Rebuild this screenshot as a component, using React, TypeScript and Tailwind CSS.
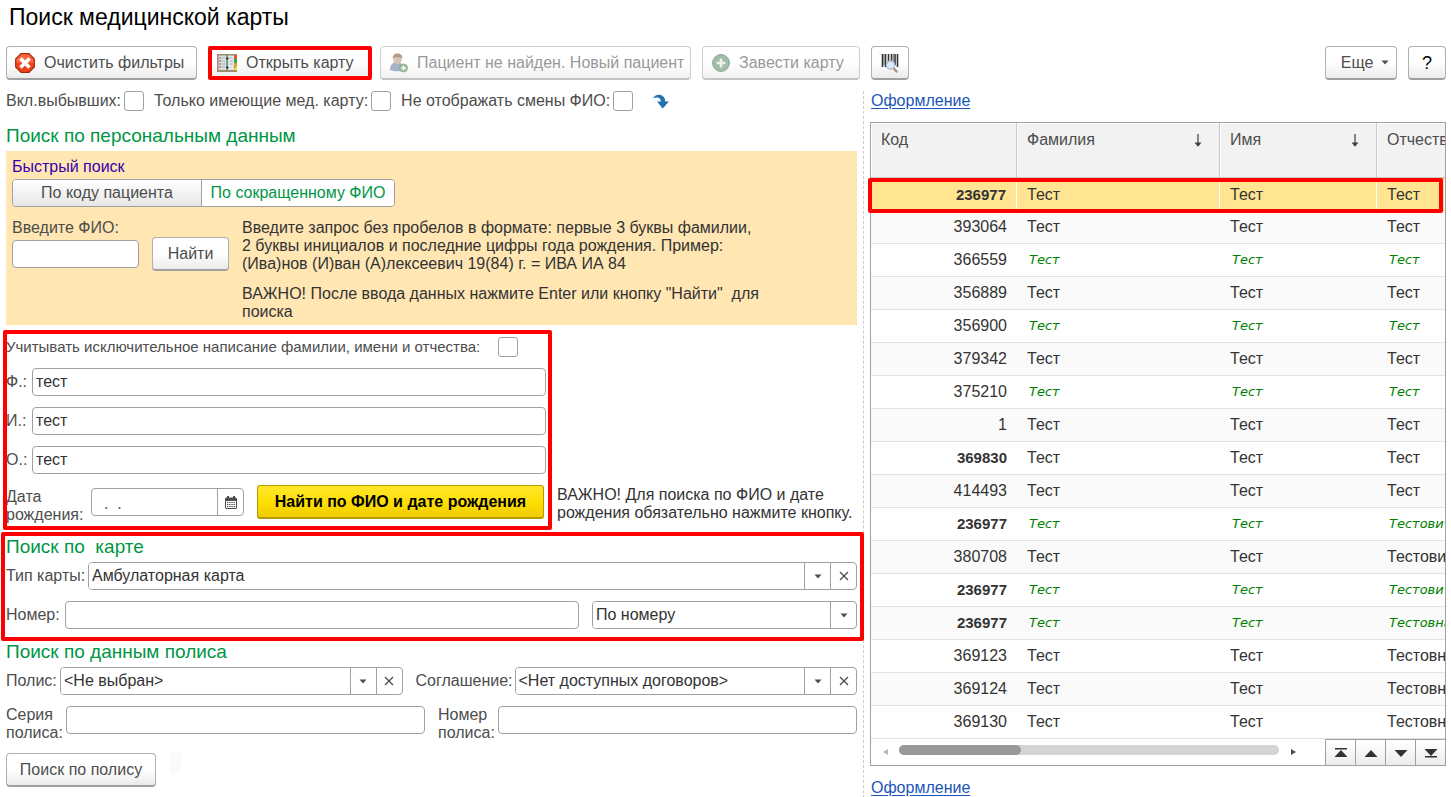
import { useState } from "react";
import type { ReactNode } from "react";

interface Patient {
  code: string;
  middleName: string;
  bold?: boolean;
  green?: boolean;
}

const patients: Patient[] = [
  { code: "236977", middleName: "Тест", bold: true },
  { code: "393064", middleName: "Тест" },
  { code: "366559", middleName: "Тест", green: true },
  { code: "356889", middleName: "Тест" },
  { code: "356900", middleName: "Тест", green: true },
  { code: "379342", middleName: "Тест" },
  { code: "375210", middleName: "Тест", green: true },
  { code: "1", middleName: "Тест" },
  { code: "369830", middleName: "Тест", bold: true },
  { code: "414493", middleName: "Тест" },
  { code: "236977", middleName: "Тестович", bold: true, green: true },
  { code: "380708", middleName: "Тестович" },
  { code: "236977", middleName: "Тестович", bold: true, green: true },
  { code: "236977", middleName: "Тестовна", bold: true, green: true },
  { code: "369123", middleName: "Тестовна" },
  { code: "369124", middleName: "Тестовна" },
  { code: "369130", middleName: "Тестовна" },
];

const buttonStyle =
  "flex h-[34px] shrink-0 items-center justify-center whitespace-nowrap rounded-[4px] border border-[#b0b0b0] border-b-2 border-b-[#a0a0a0] bg-linear-to-b from-white from-50% to-[#ebebeb] text-[#4d4d4d]";
const disabledStyle =
  "flex h-[34px] shrink-0 items-center whitespace-nowrap rounded-[4px] border border-[#cfcfcf] border-b-2 border-b-[#c4c4c4] bg-linear-to-b from-white from-50% to-[#f0f0f0] text-[#999999]";
const inputStyle =
  "h-7 min-w-0 rounded-[4px] border border-[#a0a0a0] bg-white px-[3px] text-[#333333] outline-none";

// Red highlight drawn over a group of controls
const Frame = ({ className }: { className: string }) => (
  <div className={`pointer-events-none absolute rounded-[2px] border-4 border-[#ff0000] ${className}`} />
);

const Check = ({ label, className = "gap-[3px]" }: { label: string; className?: string }) => (
  <label className={`flex items-center whitespace-nowrap ${className}`}>
    {label}
    <input type="checkbox" className="size-5 shrink-0 appearance-none rounded-[3px] border border-[#a0a0a0] bg-white checked:bg-[#009646]" />
  </label>
);

const Heading = ({ children }: { children: ReactNode }) => (
  <h2 className="whitespace-pre text-[19px] leading-6 text-[#009646]">{children}</h2>
);

const Caret = () => (
  <svg width="8" height="5" viewBox="0 0 8 5" aria-hidden="true">
    <path d="M0.5 0.5h7L4 4.5z" fill="#4d4d4d" />
  </svg>
);

const Combo = ({ id, value, clearable, className }: { id: string; value: string; clearable?: boolean; className: string }) => (
  <div className={`flex h-7 min-w-0 overflow-hidden rounded-[4px] border border-[#a0a0a0] bg-white ${className}`}>
    <select id={id} aria-label={value} className="min-w-0 flex-1 appearance-none bg-white px-[3px] text-[#333333] outline-none">
      <option>{value}</option>
    </select>
    <span className="flex w-[26px] items-center justify-center border-l border-[#a0a0a0]">
      <Caret />
    </span>
    {clearable && (
      <button aria-label="Очистить" className="flex w-[26px] items-center justify-center border-l border-[#a0a0a0]">
        <svg width="10" height="10" viewBox="0 0 10 10" aria-hidden="true">
          <path d="M1 1l8 8M9 1l-8 8" stroke="#4d4d4d" strokeWidth="1.3" />
        </svg>
      </button>
    )}
  </div>
);

const ClearIcon = () => (
  <svg width="20" height="20" viewBox="0 0 20 20" aria-hidden="true">
    <path d="M6 .7h8L19.3 6v8L14 19.3H6L.7 14V6z" fill="#f0441a" stroke="#a8260e" strokeWidth="1.2" />
    <path d="M6.2 1.6h7.6L18.4 6.2v3.6H1.6V6.2z" fill="#fb6a42" />
    <path d="M6.8 6.8l6.4 6.4M13.200 6.800l-6.400 6.400" stroke="#fff" strokeWidth="3.6" strokeLinecap="square" />
  </svg>
);

const CardIcon = () => (
  <svg width="20" height="18" viewBox="0 0 20 18" aria-hidden="true">
    <rect width="20" height="18" fill="#a08a70" />
    <rect x="1.5" y="1.5" width="8" height="14.5" fill="#d3e2e1" />
    <rect x="10.5" y="1.5" width="6.5" height="14.5" fill="#dfe8e4" />
    <path d="M9.5 1h1.4v16H9.5z" fill="#6d8585" />
    <path d="M9 4.500h2.500M9 13.500h2.500" stroke="#222" strokeWidth="1.400" />
    <path d="M4.500 4h3.500M4.500 7h3.500M4.500 10h3.500M4.500 13h3.500M12.500 4h3M12.500 7h3M12.500 10h3" stroke="#a3bcc4" />
    <path d="M2.300 4h1.500M2.300 7h1.500M2.300 10h1.500M2.300 13h1.500" stroke="#e34b3d" strokeWidth="1.400" />
    <path d="M17 1h3v4h-3z" fill="#e8582c" />
    <path d="M17 5h3v4h-3z" fill="#35a852" />
    <path d="M17 9h3v4h-3z" fill="#e59b34" />
    <path d="M16 16l4-4v4z" fill="#f5e62c" />
  </svg>
);

const UserAddIcon = () => (
  <svg width="20" height="20" viewBox="0 0 20 20" aria-hidden="true">
    <path d="M1 17c0-5 2.500-7.500 6-7.500h2c4 0 6 3 6 7.500-3 1.800-11 1.800-14 0z" fill="#a4b4c8" />
    <ellipse cx="8.500" cy="6" rx="4.300" ry="5" fill="#d8c4b4" />
    <path d="M3.800 6C3.500 2 5.500.5 8.500.5S13.700 2 13.300 6L12 4.500 5.500 4z" fill="#b09a8c" />
    <circle cx="14.500" cy="15" r="4" fill="#9dbd9d" stroke="#86a786" strokeWidth=".8" />
    <path d="M14.500 12.800v4.400M12.300 15h4.400" stroke="#fff" strokeWidth="1.400" />
  </svg>
);

const PlusIcon = () => (
  <svg width="18" height="18" viewBox="0 0 18 18" aria-hidden="true">
    <circle cx="9" cy="9" r="8.400" fill="#9fbda7" stroke="#87a590" />
    <path d="M9 4.500v9M4.500 9h9" stroke="#eef0ee" strokeWidth="2.600" />
  </svg>
);

const BarcodeIcon = () => (
  <svg width="20" height="20" viewBox="0 0 20 20" aria-hidden="true">
    <path d="M2.500 1v13M5.500 1v13M8.500 1v9M11.500 1v9M15 1v11M17.500 1v13" stroke="#333" strokeWidth="1.600" />
    <path d="M4 1v11M13.300 1v9" stroke="#444" strokeWidth=".7" />
    <path d="M13 14.500l3.500 4" stroke="#c08a6a" strokeWidth="2.400" strokeLinecap="round" />
    <circle cx="10.500" cy="12" r="4.200" fill="#d9e8fa" stroke="#a9b5d0" strokeWidth="1.200" />
  </svg>
);

const CalendarIcon = () => (
  <svg width="12" height="13" viewBox="0 0 12 13" aria-hidden="true">
    <path d="M1 1.500h10l1 1V12l-1 1H1l-1-1V2.500z" fill="#4d4d4d" />
    <path d="M3 0v3M9 0v3" stroke="#4d4d4d" strokeWidth="2" />
    <path d="M1 5h10v7H1z" fill="#fff" />
    <path d="M2 6.500h8M2 8.500h8M2 10.500h8" stroke="#4d4d4d" strokeWidth="1.200" strokeDasharray="1.400 .8" />
  </svg>
);

const SortArrow = () => (
  <svg width="8" height="13" viewBox="0 0 8 13" aria-hidden="true">
    <path d="M4 0v10" stroke="#404040" strokeWidth="1.200" />
    <path d="M.5 8.500h7L4 12.800z" fill="#404040" />
  </svg>
);

const pagerButtons = [
  { label: "В начало", path: "M1 0h12v1.500H1zM7 2l6.500 7H.5z" },
  { label: "Вверх", path: "M7 2l6.500 7H.5z" },
  { label: "Вниз", path: "M.5 2h13L7 9z" },
  { label: "В конец", path: "M.5 1h13L7 8zM1 8h12v1.500H1z" },
];

const Toolbar = () => (
  <div className="flex items-center gap-[11px] pl-1.5 pr-[5px]">
    <button className={`${buttonStyle} w-[191px] gap-[9px] pl-2`}>
      <ClearIcon />
      <span className="flex-1 text-left">Очистить фильтры</span>
    </button>
    <div className="relative">
      <button className={`${buttonStyle} w-[161px] gap-[9px] pl-2`}>
        <CardIcon />
        <span className="flex-1 text-left">Открыть карту</span>
      </button>
      <Frame className="inset-y-0 left-0 -right-[3px]" />
    </div>
    <button disabled className={`${disabledStyle} w-[311px] gap-2 pl-2`}>
      <UserAddIcon />
      Пациент не найден. Новый пациент
    </button>
    <button disabled className={`${disabledStyle} w-[158px] gap-[9px] pl-[9px]`}>
      <PlusIcon />
      Завести карту
    </button>
    <button aria-label="Поиск по штрихкоду" className={`${buttonStyle} w-[38px]`}>
      <BarcodeIcon />
    </button>
    <button className={`${buttonStyle} ml-auto w-[72px] gap-2 pl-2`}>
      Еще
      <Caret />
    </button>
    <button className={`${buttonStyle} w-[38px] text-lg text-black`}>?</button>
  </div>
);

const QuickSearch = () => {
  const [byCode, setByCode] = useState(false);
  const active = "bg-white text-[#009646]";
  const idle = "bg-linear-to-b from-white to-[#e6e6e6] text-[#4d4d4d]";

  return (
    <section className="bg-[#ffe6b3] px-1.5 pb-1 pt-1.5">
      <h3 className="leading-5 text-[#3300b0]">Быстрый поиск</h3>
      <div className="mt-0.5 flex h-7 w-[383px] overflow-hidden rounded-[4px] border border-[#a0a0a0]">
        <button onClick={() => setByCode(true)} className={`flex-1 ${byCode ? active : idle}`}>
          По коду пациента
        </button>
        <button onClick={() => setByCode(false)} className={`w-[193px] border-l border-[#a0a0a0] ${byCode ? idle : active}`}>
          По сокращенному ФИО
        </button>
      </div>
      <div className="mt-3 flex items-start gap-[13px]">
        <div className="flex w-[127px] flex-col gap-[3px]">
          <label htmlFor="quick" className="leading-[18px]">Введите ФИО:</label>
          <input id="quick" className={inputStyle} />
        </div>
        <button className={`${buttonStyle} mt-[18px] w-[77px]`}>Найти</button>
        <div className="w-[520px] space-y-3 leading-[18px] text-[#333333]">
          <p>
            Введите запрос без пробелов в формате: первые 3 буквы фамилии,
            <br />2 буквы инициалов и последние цифры года рождения. Пример:
            <br />
            (Ива)нов (И)ван (А)лексеевич 19(84) г. = ИВА ИА 84
          </p>
          <p className="whitespace-pre-wrap">ВАЖНО! После ввода данных нажмите Enter или кнопку "Найти"&nbsp; для поиска</p>
        </div>
      </div>
    </section>
  );
};

const NameSearch = () => (
  <section className="mt-3 flex items-end gap-[11px]">
    <div className="relative w-[540px] shrink-0">
      <Check label="Учитывать исключительное написание фамилии, имени и отчества:" className="gap-[18px] text-[15px]" />
      {["Ф.:", "И.:", "О.:"].map((label) => (
        <label key={label} className="mt-[11px] flex items-center">
          <span className="w-[26px] shrink-0">{label}</span>
          <input defaultValue="тест" className={`${inputStyle} flex-1`} />
        </label>
      ))}
      <div className="mt-[11px] flex items-start">
        <label htmlFor="birth" className="w-[85px] pt-[3px] leading-[18px]">Дата рождения:</label>
        <div className="mt-[3px] flex h-7 w-[153px] overflow-hidden rounded-[4px] border border-[#a0a0a0] bg-white">
          <input id="birth" defaultValue="  .  ." className="min-w-0 flex-1 whitespace-pre px-[3px] pt-1 outline-none" />
          <button aria-label="Календарь" className="flex w-[26px] items-center justify-center border-l border-[#a0a0a0]">
            <CalendarIcon />
          </button>
        </div>
        <button className="ml-[13px] mr-0.5 h-[34px] flex-1 whitespace-nowrap rounded-[3px] border border-b-2 border-[#b39b00] bg-linear-to-b from-[#ffe629] via-[#ffe000] to-[#f0cc00] font-bold text-black">
          Найти по ФИО и дате рождения
        </button>
      </div>
      <Frame className="-bottom-1.5 -left-[3px] -right-1.5 -top-[7px]" />
    </div>
    <p className="pb-0.5 leading-[18px] text-[#333333]">
      ВАЖНО! Для поиска по ФИО и дате
      <br />
      рождения обязательно нажмите кнопку.
    </p>
  </section>
);

const CardSearch = () => (
  <section className="relative mt-[11px]">
    <Heading>Поиск по  карте</Heading>
    <div className="mt-[3px] flex items-center">
      <label htmlFor="type" className="w-[82px] shrink-0">Тип карты:</label>
      <Combo id="type" value="Амбулаторная карта" clearable className="flex-1" />
    </div>
    <div className="mt-[11px] flex items-center">
      <label htmlFor="number" className="w-[59px] shrink-0">Номер:</label>
      <input id="number" className={`${inputStyle} flex-1`} />
      <Combo id="mode" value="По номеру" className="ml-[13px] w-[265px]" />
    </div>
    <Frame className="-bottom-3 -left-[5px] -right-[7px] -top-[3px]" />
  </section>
);

const PolicySearch = () => (
  <section className="mt-[11px]">
    <Heading>Поиск по данным полиса</Heading>
    <div className="mt-[3px] flex items-center">
      <label htmlFor="policy" className="w-[54px] shrink-0">Полис:</label>
      <Combo id="policy" value="<Не выбран>" clearable className="flex-1" />
      <label htmlFor="contract" className="ml-[13px] w-[99px] shrink-0">Соглашение:</label>
      <Combo id="contract" value="<Нет доступных договоров>" clearable className="flex-1" />
    </div>
    <div className="mt-[11px] flex items-start">
      <label htmlFor="series" className="w-[60px] shrink-0 leading-[18px]">Серия полиса:</label>
      <input id="series" className={`${inputStyle} flex-1`} />
      <label htmlFor="policyNumber" className="ml-[13px] w-[60px] shrink-0 leading-[18px]">Номер полиса:</label>
      <input id="policyNumber" className={`${inputStyle} flex-1`} />
    </div>
    <div className="mt-[11px] flex items-start gap-3.5">
      <button className={`${buttonStyle} w-[150px]`}>Поиск по полису</button>
      <div className="h-5 w-[11px] bg-[#fafafa]" />
    </div>
  </section>
);

const PatientTable = () => {
  const [selected, setSelected] = useState(0);
  const columns = ["Код", "Фамилия", "Имя", "Отчество"];

  return (
    <div className="relative mt-[11px]">
      <div className="overflow-hidden border border-[#a0a0a0] bg-white">
        <table className="w-full table-fixed border-separate border-spacing-0 whitespace-nowrap text-left text-[#333333]">
          <colgroup>
            <col className="w-[146px]" />
            <col className="w-[203px]" />
            <col className="w-[157px]" />
            <col />
          </colgroup>
          <thead>
            <tr className="h-[55px] bg-[#f2f2f2] text-[#4d4d4d]">
              {columns.map((column, index) => (
                <th key={column} className="overflow-hidden border-b border-r border-[#c8c8c8] pl-2.5 pt-[7px] align-top font-normal shadow-[inset_1px_1px_0_#ffffff] last:border-r-0">
                  <span className="flex items-center justify-between pr-[17px]">
                    {column}
                    {(index === 1 || index === 2) && <SortArrow />}
                  </span>
                </th>
              ))}
            </tr>
          </thead>
          <tbody>
            {patients.map((patient, index) => {
              const isSelected = index === selected;
              const border = isSelected ? "border-y border-y-[#ffb900] border-r border-r-white" : "border-b border-[#e2e2e2]";
              const name = patient.green ? "font-['DejaVu_Sans',sans-serif] text-[13px] italic text-[#008000] pl-3" : "pl-2.5";
              return (
                <tr
                  key={index}
                  onClick={() => setSelected(index)}
                  className={`h-[33px] ${isSelected ? "bg-[#ffe591]" : "odd:bg-white even:bg-[#fafafa]"}`}
                >
                  <td className={`p-0 pr-2.5 text-right ${border} ${patient.bold ? "text-[15px] font-bold" : ""}`}>{patient.code}</td>
                  <td className={`p-0 ${name} ${border}`}>Тест</td>
                  <td className={`p-0 ${name} ${border}`}>Тест</td>
                  <td className={`overflow-hidden p-0 ${name} ${border}`}>{patient.middleName}</td>
                </tr>
              );
            })}
          </tbody>
        </table>
        <div className="flex h-[26px] items-center">
          <button aria-label="Влево" className="flex w-7 justify-center">
            <svg width="5" height="6" viewBox="0 0 5 6" aria-hidden="true">
              <path d="M5 0v6L0 3z" fill="#b8b8b8" />
            </svg>
          </button>
          <div className="mb-1 h-2.5 flex-1 rounded-full bg-[#d4d4d4]">
            <div className="h-2.5 w-[32%] rounded-full bg-[#999999]" />
          </div>
          <button aria-label="Вправо" className="mr-[18px] flex w-7 justify-center">
            <svg width="5" height="6" viewBox="0 0 5 6" aria-hidden="true">
              <path d="M0 0v6l5-3z" fill="#4d4d4d" />
            </svg>
          </button>
          {pagerButtons.map((button) => (
            <button
              key={button.label}
              aria-label={button.label}
              className="flex h-[26px] w-[30px] items-center justify-center border-l border-t border-[#a0a0a0] bg-linear-to-b from-white to-[#ededed]"
            >
              <svg width="14" height="10" viewBox="0 0 14 10" aria-hidden="true">
                <path d={button.path} fill="#333333" />
              </svg>
            </button>
          ))}
        </div>
      </div>
      <Frame className="-left-0.5 right-[3px] top-[56px] h-[35px]" />
    </div>
  );
};

const App = () => {
  return (
    <div className="bg-white font-['Liberation_Sans',Arial,sans-serif] text-base leading-5 text-[#4d4d4d]">
      <h1 className="pb-3.5 pl-[9px] pt-0.5 text-[23px] leading-[30px] text-black">Поиск медицинской карты</h1>
      <Toolbar />
      <div className="mt-[11px] grid grid-cols-[864fr_587fr]">
        <main className="min-w-0 border-r border-dashed border-[#cccccc] px-1.5 pb-2.5">
          <div className="flex items-center gap-2.5">
            <Check label="Вкл.выбывших:" />
            <Check label="Только имеющие мед. карту:" />
            <Check label="Не отображать смены ФИО:" />
            <button aria-label="Обновить" className="ml-2.5">
              <svg width="16" height="15" viewBox="0 0 16 15" aria-hidden="true">
                <path d="M0 4.500C2-1 12-1 12.300 7.500H16L9.700 14.500 4 7.500h3.800C8 3.500 4 2.500 0 4.500z" fill="#2472ad" />
              </svg>
            </button>
          </div>
          <div className="mb-[3px] mt-[13px]">
            <Heading>Поиск по персональным данным</Heading>
          </div>
          <QuickSearch />
          <NameSearch />
          <CardSearch />
          <PolicySearch />
        </main>
        <aside className="min-w-0 pl-1.5 pr-[5px]">
          <a href="#top" className="ml-px text-[#1a56b8] underline underline-offset-2">Оформление</a>
          <PatientTable />
          <a href="#bottom" className="ml-px mt-3 inline-block text-[#1a56b8] underline underline-offset-2">Оформление</a>
        </aside>
      </div>
    </div>
  );
};

export default App;
